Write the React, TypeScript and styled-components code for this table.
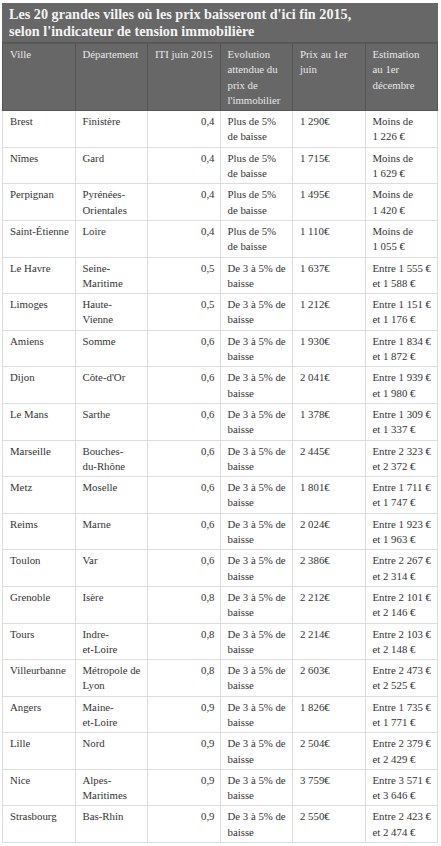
import React from "react";
import styled, { createGlobalStyle } from "styled-components";

const GlobalStyle = createGlobalStyle`
  html, body {
    margin: 0;
    padding: 0;
    background: #fff;
  }
  body {
    font-family: "Liberation Serif", "Times New Roman", serif;
  }
`;

const NoWrap = styled.span`
  white-space: nowrap;
`;

type Row = {
  ville: string;
  dep: React.ReactNode;
  iti: string;
  evol: string;
  prix: string;
  estim: string;
};

// nbsp inside the amounts so they never break between digits
const n = (s: string) => s.replace(/ /g, "\u00a0");
const between = (a: string, b: string) => "Entre " + n(a) + " et " + n(b);

const rows: Row[] = [
  { ville: "Brest", dep: "Finistère", iti: "0,4", evol: "Plus de 5% de baisse", prix: "1 290€", estim: "Moins de " + n("1 226 €") },
  { ville: "Nîmes", dep: "Gard", iti: "0,4", evol: "Plus de 5% de baisse", prix: "1 715€", estim: "Moins de " + n("1 629 €") },
  { ville: "Perpignan", dep: "Pyrénées-Orientales", iti: "0,4", evol: "Plus de 5% de baisse", prix: "1 495€", estim: "Moins de " + n("1 420 €") },
  { ville: "Saint-Étienne", dep: "Loire", iti: "0,4", evol: "Plus de 5% de baisse", prix: "1 110€", estim: "Moins de " + n("1 055 €") },
  { ville: "Le Havre", dep: "Seine-Maritime", iti: "0,5", evol: "De 3 à 5% de baisse", prix: "1 637€", estim: between("1 555 €", "1 588 €") },
  { ville: "Limoges", dep: "Haute-Vienne", iti: "0,5", evol: "De 3 à 5% de baisse", prix: "1 212€", estim: between("1 151 €", "1 176 €") },
  { ville: "Amiens", dep: "Somme", iti: "0,6", evol: "De 3 à 5% de baisse", prix: "1 930€", estim: between("1 834 €", "1 872 €") },
  { ville: "Dijon", dep: "Côte-d'Or", iti: "0,6", evol: "De 3 à 5% de baisse", prix: "2 041€", estim: between("1 939 €", "1 980 €") },
  { ville: "Le Mans", dep: "Sarthe", iti: "0,6", evol: "De 3 à 5% de baisse", prix: "1 378€", estim: between("1 309 €", "1 337 €") },
  { ville: "Marseille", dep: <>Bouches-<NoWrap>du-Rhône</NoWrap></>, iti: "0,6", evol: "De 3 à 5% de baisse", prix: "2 445€", estim: between("2 323 €", "2 372 €") },
  { ville: "Metz", dep: "Moselle", iti: "0,6", evol: "De 3 à 5% de baisse", prix: "1 801€", estim: between("1 711 €", "1 747 €") },
  { ville: "Reims", dep: "Marne", iti: "0,6", evol: "De 3 à 5% de baisse", prix: "2 024€", estim: between("1 923 €", "1 963 €") },
  { ville: "Toulon", dep: "Var", iti: "0,6", evol: "De 3 à 5% de baisse", prix: "2 386€", estim: between("2 267 €", "2 314 €") },
  { ville: "Grenoble", dep: "Isère", iti: "0,8", evol: "De 3 à 5% de baisse", prix: "2 212€", estim: between("2 101 €", "2 146 €") },
  { ville: "Tours", dep: <>Indre-<NoWrap>et-Loire</NoWrap></>, iti: "0,8", evol: "De 3 à 5% de baisse", prix: "2 214€", estim: between("2 103 €", "2 148 €") },
  { ville: "Villeurbanne", dep: "Métropole de Lyon", iti: "0,8", evol: "De 3 à 5% de baisse", prix: "2 603€", estim: between("2 473 €", "2 525 €") },
  { ville: "Angers", dep: <>Maine-<NoWrap>et-Loire</NoWrap></>, iti: "0,9", evol: "De 3 à 5% de baisse", prix: "1 826€", estim: between("1 735 €", "1 771 €") },
  { ville: "Lille", dep: "Nord", iti: "0,9", evol: "De 3 à 5% de baisse", prix: "2 504€", estim: between("2 379 €", "2 429 €") },
  { ville: "Nice", dep: "Alpes-Maritimes", iti: "0,9", evol: "De 3 à 5% de baisse", prix: "3 759€", estim: between("3 571 €", "3 646 €") },
  { ville: "Strasbourg", dep: "Bas-Rhin", iti: "0,9", evol: "De 3 à 5% de baisse", prix: "2 550€", estim: between("2 423 €", "2 474 €") },
];

const Page = styled.div`
  padding: 3px 3px 0 2px;
`;

const Table = styled.table`
  width: 436px;
  border-collapse: collapse;
  table-layout: fixed;
  font-size: 10.8px;
  line-height: 15.3px;
  color: #333;
  border: 1px solid #ddd;
`;

const Title = styled.caption`
  background: #676767;
  color: #f4f4f4;
  font-weight: bold;
  font-size: 14.2px;
  line-height: 17px;
  text-align: left;
  padding: 3px 7px 2px;
  border-bottom: 1px solid #555;
`;

const HeadCell = styled.th`
  background: #676767;
  color: #e8e8e8;
  font-weight: normal;
  text-align: left;
  vertical-align: top;
  padding: 3px 5px 2px 7px;
  border: 1px solid #555;
  border-top: 1px solid #5a5a5a;
`;

const Cell = styled.td<{ $num?: boolean }>`
  vertical-align: top;
  text-align: ${(p) => (p.$num ? "right" : "left")};
  padding: 3px 5px 2px 7px;
  border: 1px solid #ddd;
`;

const heads = [
  "Ville",
  "Département",
  "ITI juin 2015",
  "Evolution attendue du prix de l'immobilier",
  "Prix au 1er juin",
  "Estimation au 1er décembre",
];

export default function App() {
  return (
    <Page>
      <GlobalStyle />
      <Table>
        <Title>
          Les 20 grandes villes où les prix baisseront d'ici fin 2015,
          <br />
          selon l'indicateur de tension immobilière
        </Title>
        <thead>
          <tr>
            {heads.map((h) => (
              <HeadCell key={h}>{h}</HeadCell>
            ))}
          </tr>
        </thead>
        <tbody>
          {rows.map((r) => (
            <tr key={r.ville}>
              <Cell>{r.ville}</Cell>
              <Cell>{r.dep}</Cell>
              <Cell $num>{r.iti}</Cell>
              <Cell>{r.evol}</Cell>
              <Cell>{r.prix}</Cell>
              <Cell>{r.estim}</Cell>
            </tr>
          ))}
        </tbody>
      </Table>
    </Page>
  );
}
